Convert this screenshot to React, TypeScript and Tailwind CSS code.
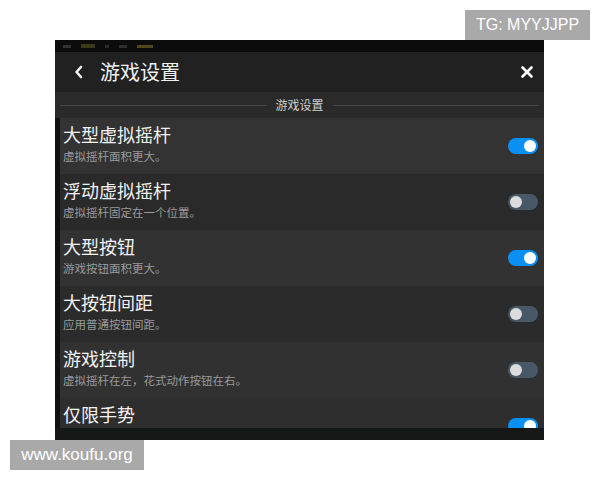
import React from "react";

const rows = [
  { t: "大型虚拟摇杆", s: "虚拟摇杆面积更大。", on: true, bg: "bg-[#333333]" },
  { t: "浮动虚拟摇杆", s: "虚拟摇杆固定在一个位置。", on: false, bg: "bg-[#2a2a2a]" },
  { t: "大型按钮", s: "游戏按钮面积更大。", on: true, bg: "bg-[#323232]" },
  { t: "大按钮间距", s: "应用普通按钮间距。", on: false, bg: "bg-[#2b2b2b]" },
  { t: "游戏控制", s: "虚拟摇杆在左，花式动作按钮在右。", on: false, bg: "bg-[#313131]" },
  { t: "仅限手势", s: "", on: true, bg: "bg-[#2e2e2e]" },
];

function Toggle({ on }: { on: boolean }) {
  return (
    <div
      className={
        on
          ? "w-[30px] h-[16px] rounded-full bg-[#0a90f2] flex items-center justify-end pr-[2px]"
          : "w-[30px] h-[16px] rounded-full bg-[#485866] flex items-center justify-start pl-[2px]"
      }
    >
      <div className={on ? "w-[12px] h-[12px] rounded-full bg-white" : "w-[12px] h-[12px] rounded-full bg-[#dcdcdc]"} />
    </div>
  );
}

export default function App() {
  const font = { fontFamily: '"Noto Sans CJK SC", "Noto Sans", sans-serif' };
  return (
    <div className="w-[600px] h-[480px] bg-white flex flex-col overflow-hidden" style={font}>
      <div className="h-[40px] flex items-end justify-end pr-[10px]">
        <div className="w-[125px] h-[30px] bg-[#a9a9a9] text-white text-[16px] flex items-center justify-center" style={{ fontFamily: '"Liberation Sans", sans-serif' }}>
          TG: MYYJJPP
        </div>
      </div>
      <div className="ml-[55px] w-[489px] h-[400px] bg-[#111111] flex flex-col">
        <div className="h-[12px] bg-[#0c0c0c] flex items-center gap-[10px] pl-[8px]">
          <div className="w-[8px] h-[3px] bg-[#333]" />
          <div className="w-[14px] h-[4px] bg-[#3a3a1a]" />
          <div className="w-[4px] h-[3px] bg-[#2a2a2a]" />
          <div className="w-[8px] h-[3px] bg-[#2e2e2e]" />
          <div className="w-[16px] h-[3px] bg-[#4a4a1a]" />
        </div>
        <div className="h-[40px] bg-[#212121] flex items-center pl-[18px] pr-[10px]">
          <svg width="12" height="14" viewBox="0 0 12 14" className="mr-[15px]">
            <path d="M8 2 L3.5 7 L8 12" stroke="#f2f2f2" strokeWidth="2.6" fill="none" strokeLinecap="round" strokeLinejoin="round" />
          </svg>
          <span className="text-[20px] text-[#f0f0f0] leading-none">游戏设置</span>
          <div className="flex-1" />
          <svg width="14" height="14" viewBox="0 0 14 14">
            <path d="M2.5 2.5 L11.5 11.5 M11.5 2.5 L2.5 11.5" stroke="#ffffff" strokeWidth="2.6" strokeLinecap="round" />
          </svg>
        </div>
        <div className="h-[26px] bg-[#2a2a2a] flex items-center pl-[5px] pr-[5px]">
          <div className="flex-1 h-px bg-[#464646]" />
          <span className="px-[9px] text-[12px] text-[#cfcfcf] leading-none">游戏设置</span>
          <div className="flex-1 h-px bg-[#464646]" />
        </div>
        <div className="flex-1 overflow-hidden pl-[5px]">
          {rows.map((r) => (
            <div key={r.t} className={`h-[56px] ${r.bg} flex items-center pl-[3px] pr-[6px]`}>
              <div className="flex-1 self-start pt-[5px] flex flex-col">
                <div className="text-[18px] text-[#f2f2f2] leading-[22px]">{r.t}</div>
                {r.s && <div className="mt-[3px] text-[11.5px] text-[#9a9a9a] leading-[16px]">{r.s}</div>}
              </div>
              <Toggle on={r.on} />
            </div>
          ))}
        </div>
        <div className="h-[12px] bg-[#161818]" />
      </div>
      <div className="ml-[10px] w-[134px] h-[30px] bg-[#a9a9a9] text-white text-[17px] flex items-center justify-center" style={{ fontFamily: '"Liberation Sans", sans-serif' }}>
        www.koufu.org
      </div>
    </div>
  );
}
